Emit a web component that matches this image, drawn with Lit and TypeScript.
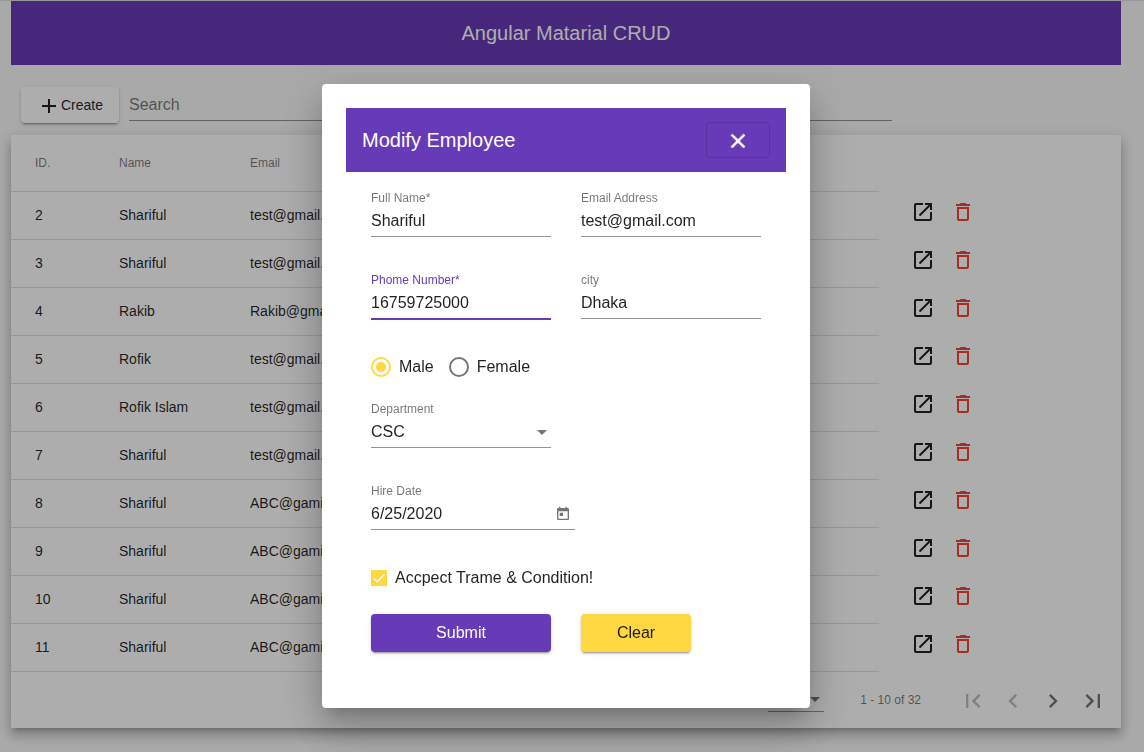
import { LitElement, html, css, svg } from "lit";
import { customElement, property, state } from "lit/decorators.js";
import { classMap } from "lit/directives/class-map.js";

const ICONS: Record<string, string> = {
  add: "M19 14h-6v6h-2v-6H5v-2h6V6h2v6h6v2z",
  close:
    "M19 7.41L17.59 6 12 11.59 6.41 6 5 7.41 10.59 13 5 18.59 6.41 20 12 14.41 17.59 20 19 18.59 13.41 13z",
  launch:
    "M19 19H5V5h7V3H5c-1.11 0-2 .9-2 2v14c0 1.1.89 2 2 2h14c1.1 0 2-.9 2-2v-7h-2v7zM14 3v2h3.59l-9.83 9.83 1.41 1.41L19 6.41V10h2V3h-7z",
  trash:
    "M6 19c0 1.1.9 2 2 2h8c1.1 0 2-.9 2-2V7H6v12zM8 9h8v10H8V9zm7.5-5l-1-1h-5l-1 1H5v2h14V4z",
  first: "M18.41 16.59L13.82 12l4.59-4.59L17 6l-6 6 6 6zM6 6h2v12H6z",
  prev: "M15.41 7.41L14 6l-6 6 6 6 1.41-1.41L10.83 12z",
  next: "M10 6L8.59 7.41 13.17 12l-4.58 4.59L10 18l6-6z",
  last: "M5.59 7.41L10.18 12l-4.59 4.59L7 18l6-6-6-6zM16 6h2v12h-2z",
  calendar:
    "M19 3h-1V1h-2v2H8V1H6v2H5c-1.11 0-1.99.9-1.99 2L3 19c0 1.1.89 2 2 2h14c1.1 0 2-.9 2-2V5c0-1.1-.9-2-2-2zm0 16H5V8h14v11zM7 10h5v5H7z",
};

const icon = (name: string, size = 24) => html`
  <svg width=${size} height=${size} viewBox="0 0 24 24" fill="currentColor" aria-hidden="true">
    ${svg`<path d=${ICONS[name]}></path>`}
  </svg>
`;

const arrow = html`
  <svg class="arrow" width="10" height="5" viewBox="0 0 10 5" fill="currentColor" aria-hidden="true">
    <path d="M0 0h10L5 5z"></path>
  </svg>
`;

const base = css`
  * {
    box-sizing: border-box;
  }
  svg {
    display: block;
    flex: none;
  }
  button,
  input,
  select {
    margin: 0;
    padding: 0;
    border: 0;
    outline: 0;
    background: none;
    color: inherit;
    font: inherit;
    letter-spacing: normal;
  }
  button {
    display: inline-flex;
    align-items: center;
    justify-content: center;
    cursor: pointer;
  }
  select {
    appearance: none;
  }
  .picker {
    display: grid;
    align-items: center;
  }
  .picker select,
  .picker .arrow {
    grid-area: 1 / 1;
  }
  .picker .arrow {
    justify-self: end;
    margin-right: 4px;
    color: rgba(0, 0, 0, 0.54);
    pointer-events: none;
  }
`;

interface Employee {
  id: number;
  name: string;
  email: string;
}

const EMPLOYEES: Employee[] = [
  { id: 2, name: "Shariful", email: "test@gmail.com" },
  { id: 3, name: "Shariful", email: "test@gmail.com" },
  { id: 4, name: "Rakib", email: "Rakib@gmail.com" },
  { id: 5, name: "Rofik", email: "test@gmail.com" },
  { id: 6, name: "Rofik Islam", email: "test@gmail.com" },
  { id: 7, name: "Shariful", email: "test@gmail.com" },
  { id: 8, name: "Shariful", email: "ABC@gamil.com" },
  { id: 9, name: "Shariful", email: "ABC@gamil.com" },
  { id: 10, name: "Shariful", email: "ABC@gamil.com" },
  { id: 11, name: "Shariful", email: "ABC@gamil.com" },
];

@customElement("employee-table")
export class EmployeeTable extends LitElement {
  @property({ attribute: false }) rows: Employee[] = [];

  static styles = [
    base,
    css`
      :host {
        display: block;
        background: #fff;
        box-shadow:
          0 5px 5px -3px rgba(0, 0, 0, 0.2),
          0 8px 10px 1px rgba(0, 0, 0, 0.14),
          0 3px 14px 2px rgba(0, 0, 0, 0.12);
      }
      table {
        width: 100%;
        table-layout: fixed;
        border-collapse: separate;
        border-spacing: 0;
      }
      .col-id {
        width: 108px;
      }
      .col-name {
        width: 131px;
      }
      .col-actions {
        width: 242px;
      }
      th {
        height: 57px;
        padding: 0;
        font-size: 12px;
        font-weight: 400;
        text-align: left;
        color: rgba(0, 0, 0, 0.54);
      }
      td {
        height: 48px;
        padding: 0 0 2px;
        font-size: 14px;
      }
      th:not(.actions),
      td:not(.actions) {
        border-bottom: 1px solid rgba(0, 0, 0, 0.12);
      }
      th:first-child,
      td:first-child {
        padding-left: 24px;
      }
      .actions {
        padding-left: 24px;
        vertical-align: top;
      }
      .buttons {
        display: flex;
      }
      .icon-button {
        width: 40px;
        height: 40px;
      }
      .warn {
        color: #f44336;
      }
      .paginator {
        display: flex;
        align-items: center;
        justify-content: flex-end;
        min-height: 56px;
        padding: 0 8px;
        font-size: 12px;
        color: rgba(0, 0, 0, 0.54);
      }
      .size {
        width: 56px;
        height: 24px;
        border-bottom: 1px solid rgba(0, 0, 0, 0.42);
      }
      .range {
        margin: 0 32px 0 36px;
      }
      .page {
        padding-top: 2px;
        color: rgba(0, 0, 0, 0.54);
      }
      .page:disabled {
        color: rgba(0, 0, 0, 0.26);
      }
    `,
  ];

  render() {
    return html`
      <table>
        <colgroup>
          <col class="col-id" />
          <col class="col-name" />
          <col />
          <col class="col-actions" />
        </colgroup>
        <thead>
          <tr>
            <th>ID.</th>
            <th>Name</th>
            <th>Email</th>
            <th class="actions"></th>
          </tr>
        </thead>
        <tbody>
          ${this.rows.map(
            (row) => html`
              <tr>
                <td>${row.id}</td>
                <td>${row.name}</td>
                <td>${row.email}</td>
                <td class="actions">
                  <div class="buttons">
                    <button class="icon-button" type="button" aria-label="Edit">${icon("launch")}</button>
                    <button class="icon-button warn" type="button" aria-label="Delete">${icon("trash")}</button>
                  </div>
                </td>
              </tr>
            `
          )}
        </tbody>
      </table>
      <div class="paginator">
        <div class="picker size">
          <select aria-label="Items per page">
            <option>10</option>
          </select>
          ${arrow}
        </div>
        <span class="range">1 - 10 of 32</span>
        <button class="icon-button page" type="button" aria-label="First page" disabled>${icon("first", 28)}</button>
        <button class="icon-button page" type="button" aria-label="Previous page" disabled>${icon("prev", 28)}</button>
        <button class="icon-button page" type="button" aria-label="Next page">${icon("next", 28)}</button>
        <button class="icon-button page" type="button" aria-label="Last page">${icon("last", 28)}</button>
      </div>
    `;
  }
}

@customElement("employee-dialog")
export class EmployeeDialog extends LitElement {
  @state() private active = "phone";

  static styles = [
    base,
    css`
      :host {
        display: block;
        width: 488px;
        max-width: 100%;
        padding: 24px;
        border-radius: 4px;
        background: #fff;
        box-shadow:
          0 11px 15px -7px rgba(0, 0, 0, 0.2),
          0 24px 38px 3px rgba(0, 0, 0, 0.14),
          0 9px 46px 8px rgba(0, 0, 0, 0.12);
        box-sizing: border-box;
      }
      .toolbar {
        display: flex;
        align-items: center;
        justify-content: space-between;
        height: 64px;
        padding: 0 16px;
        background: #673ab7;
        color: #fff;
      }
      .title {
        margin: 0;
        font-size: 20px;
        font-weight: 500;
      }
      .close {
        width: 64px;
        height: 36px;
        border: 1px solid rgba(0, 0, 0, 0.12);
        border-radius: 4px;
      }
      .close path {
        stroke: currentColor;
        stroke-width: 0.6;
      }
      form {
        display: flex;
        flex-direction: column;
        padding: 19px 25px 32px;
      }
      .pair {
        display: grid;
        grid-template-columns: 180px 180px;
        column-gap: 30px;
        margin-bottom: 36px;
      }
      .field {
        display: flex;
        flex-direction: column;
        gap: 6px;
        width: 180px;
        height: 46px;
        border-bottom: 1px solid rgba(0, 0, 0, 0.42);
      }
      .field label {
        font-size: 12px;
        line-height: 14px;
        color: rgba(0, 0, 0, 0.54);
      }
      .field input,
      .field select {
        width: 100%;
        min-width: 0;
        height: 20px;
        font-size: 16px;
        line-height: 20px;
      }
      .field.active {
        border-color: #673ab7;
        box-shadow: 0 1px 0 #673ab7;
      }
      .field.active label {
        color: #673ab7;
      }
      .single {
        margin-bottom: 36px;
      }
      .date {
        width: 204px;
      }
      .date-line {
        display: flex;
      }
      .date-line button {
        width: 24px;
        height: 20px;
        flex: none;
        color: rgba(0, 0, 0, 0.54);
      }
      .choices {
        display: flex;
        gap: 15px;
        margin-bottom: 23px;
      }
      .choice {
        display: flex;
        align-items: center;
        gap: 8px;
        height: 24px;
        font-size: 16px;
      }
      .choice input[type="radio"] {
        appearance: none;
        width: 20px;
        height: 20px;
        border: 2px solid rgba(0, 0, 0, 0.54);
        border-radius: 50%;
      }
      .choice input[type="radio"]:checked {
        border-color: #ffd740;
        background: radial-gradient(circle, #ffd740 4.5px, transparent 5.5px);
      }
      .accept {
        margin-bottom: 24px;
      }
      .box {
        display: grid;
      }
      .box input,
      .box svg {
        grid-area: 1 / 1;
      }
      .box input {
        appearance: none;
        width: 16px;
        height: 16px;
        background: #ffd740;
      }
      .box svg {
        pointer-events: none;
      }
      .submit-row {
        display: grid;
        grid-template-columns: 180px 110px;
        column-gap: 30px;
      }
      .raised {
        height: 38px;
        border-radius: 4px;
        font-size: 16px;
        box-shadow:
          0 3px 1px -2px rgba(0, 0, 0, 0.2),
          0 2px 2px 0 rgba(0, 0, 0, 0.14),
          0 1px 5px 0 rgba(0, 0, 0, 0.12);
      }
      .primary {
        background: #673ab7;
        color: #fff;
        font-weight: 500;
      }
      .accent {
        background: #ffd740;
      }
    `,
  ];

  private field(id: string, label: string, value: string) {
    return html`
      <div class=${classMap({ field: true, active: this.active === id })}>
        <label for=${id}>${label}</label>
        <input id=${id} type="text" .value=${value} @focus=${() => (this.active = id)} />
      </div>
    `;
  }

  render() {
    return html`
      <div class="toolbar">
        <h2 class="title">Modify Employee</h2>
        <button class="close" type="button" aria-label="Close">${icon("close")}</button>
      </div>
      <form @submit=${(e: Event) => e.preventDefault()}>
        <div class="pair">
          ${this.field("name", "Full Name*", "Shariful")}
          ${this.field("email", "Email Address", "test@gmail.com")}
        </div>
        <div class="pair">
          ${this.field("phone", "Phome Number*", "16759725000")}
          ${this.field("city", "city", "Dhaka")}
        </div>
        <div class="choices" role="radiogroup" aria-label="Gender">
          <label class="choice"><input type="radio" name="gender" value="1" checked />Male</label>
          <label class="choice"><input type="radio" name="gender" value="2" />Female</label>
        </div>
        <div class="field single">
          <label for="department">Department</label>
          <div class="picker">
            <select id="department">
              <option>CSC</option>
            </select>
            ${arrow}
          </div>
        </div>
        <div class="field single date">
          <label for="hired">Hire Date</label>
          <div class="date-line">
            <input id="hired" type="text" .value=${"6/25/2020"} />
            <button type="button" aria-label="Open calendar">${icon("calendar", 16)}</button>
          </div>
        </div>
        <label class="choice accept">
          <span class="box">
            <input type="checkbox" checked />
            <svg width="16" height="16" viewBox="0 0 24 24" fill="none" stroke="#fff" stroke-width="2.2">
              <path d="M4.1 12.7L9 17.6 20.3 6.3"></path>
            </svg>
          </span>
          Accpect Trame &amp; Condition!
        </label>
        <div class="submit-row">
          <button class="raised primary" type="submit">Submit</button>
          <button class="raised accent" type="button">Clear</button>
        </div>
      </form>
    `;
  }
}

@customElement("app-root")
export class AppRoot extends LitElement {
  static styles = [
    base,
    css`
      :host {
        display: block;
        font-family: "Liberation Sans", Arial, sans-serif;
        color: rgba(0, 0, 0, 0.87);
      }
      .page {
        min-height: 100vh;
        padding: 0 23px 24px 11px;
        border-top: 1px solid rgba(0, 0, 0, 0.1);
        background: #fafafa;
      }
      .header {
        display: flex;
        align-items: center;
        justify-content: center;
        height: 64px;
        background: #673ab7;
        color: #fff;
      }
      .heading {
        margin: 0;
        font-size: 20px;
        font-weight: 500;
      }
      .tools {
        display: flex;
        align-items: center;
        gap: 10px;
        padding: 22px 10px 12px;
      }
      .create {
        flex: none;
        height: 36px;
        padding: 0 16px;
        border-radius: 4px;
        background: #fff;
        font-size: 14px;
        box-shadow:
          0 3px 1px -2px rgba(0, 0, 0, 0.2),
          0 2px 2px 0 rgba(0, 0, 0, 0.14),
          0 1px 5px 0 rgba(0, 0, 0, 0.12);
      }
      .search {
        width: 70%;
        height: 32px;
        border-bottom: 1px solid rgba(0, 0, 0, 0.42);
        font-size: 16px;
      }
      .search::placeholder {
        color: rgba(0, 0, 0, 0.54);
        opacity: 1;
      }
      .backdrop {
        position: fixed;
        inset: 0;
        display: flex;
        align-items: flex-start;
        justify-content: center;
        padding: 84px 23px 24px 11px;
        overflow: auto;
        background: rgba(0, 0, 0, 0.32);
      }
    `,
  ];

  render() {
    return html`
      <main class="page">
        <header class="header"><h1 class="heading">Angular Matarial CRUD</h1></header>
        <div class="tools">
          <button class="create" type="button">${icon("add")}Create</button>
          <input class="search" type="text" placeholder="Search" aria-label="Search" />
        </div>
        <employee-table .rows=${EMPLOYEES}></employee-table>
      </main>
      <div class="backdrop">
        <employee-dialog role="dialog" aria-modal="true" aria-label="Modify Employee"></employee-dialog>
      </div>
    `;
  }
}
